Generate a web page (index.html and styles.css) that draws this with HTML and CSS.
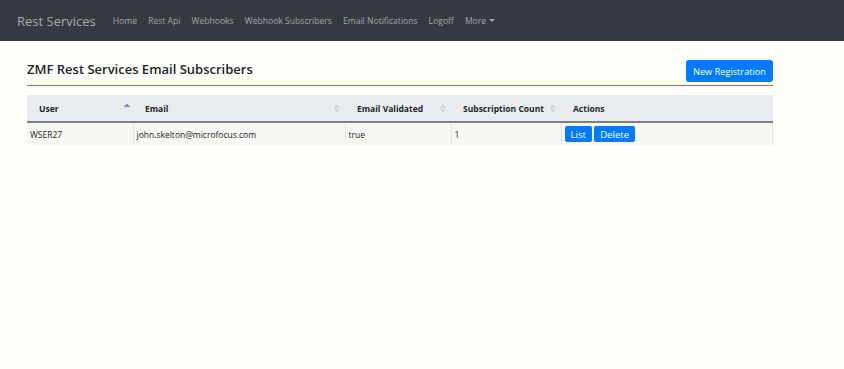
FILE: index.html
```html
<!DOCTYPE html>
<html lang="en">
<head>
  <meta charset="UTF-8">
  <meta name="viewport" content="width=device-width, initial-scale=1">
  <title>Email Subscribers</title>
  <link rel="stylesheet" href="styles.css">
</head>
<body>
  <nav class="navbar">
    <a class="brand" href="#">Rest Services</a>
    <ul class="nav">
      <li><a href="#">Home</a></li>
      <li><a href="#">Rest Api</a></li>
      <li><a href="#">Webhooks</a></li>
      <li><a href="#">Webhook Subscribers</a></li>
      <li><a href="#">Email Notifications</a></li>
      <li><a href="#">Logoff</a></li>
      <li><a href="#" class="dropdown">More</a></li>
    </ul>
  </nav>

  <div class="container">
    <div class="page-head">
      <h4>ZMF Rest Services Email Subscribers</h4>
      <button class="btn">New Registration</button>
    </div>

    <table class="grid">
      <thead>
        <tr>
          <th class="sort asc">User</th>
          <th class="sort">Email</th>
          <th class="sort">Email Validated</th>
          <th class="sort">Subscription Count</th>
          <th>Actions</th>
        </tr>
      </thead>
      <tbody>
        <tr>
          <td>WSER27</td>
          <td>john.skelton@microfocus.com</td>
          <td>true</td>
          <td>1</td>
          <td>
            <button class="btn btn-sm">List</button>
            <button class="btn btn-sm">Delete</button>
          </td>
        </tr>
      </tbody>
    </table>
  </div>
</body>
</html>
```
FILE: styles.css
```css
body {
  margin: 0;
  font-family: "Open Sans", "Noto Sans", sans-serif;
  background: #fefefa;
  color: #212529;
}
.navbar {
  height: 41px;
  background: #343a40;
  display: flex;
  align-items: center;
  padding: 0 17px;
  box-sizing: border-box;
}
.brand {
  color: #a9acaf;
  font-size: 13px;
  text-decoration: none;
  margin-right: 11.5px;
}
.nav {
  list-style: none;
  margin: 0;
  padding: 0;
  display: flex;
}
.nav a {
  display: block;
  color: #a3a6a9;
  font-size: 8.6px;
  text-decoration: none;
  padding: 0 5.5px;
}
.dropdown::after {
  content: "";
  display: inline-block;
  margin-left: 3px;
  vertical-align: 2px;
  border-top: 3px solid #a3a6a9;
  border-left: 3px solid transparent;
  border-right: 3px solid transparent;
}
.container {
  width: 746px;
  margin: 0 27px;
}
.page-head {
  display: flex;
  justify-content: space-between;
  align-items: flex-end;
  border-bottom: 1px solid #e8562a;
  padding-bottom: 3px;
  margin-top: 19px;
}
.page-head h4 {
  margin: 0 0 4px;
  font-size: 13px;
  font-weight: 600;
}
.btn {
  background: #007bff;
  color: #fff;
  border: none;
  border-radius: 3px;
  font-family: inherit;
  font-size: 9.2px;
  padding: 0 7px;
  height: 22px;
}
.btn-sm {
  height: 16px;
  padding: 0 6px;
  border-radius: 2px;
  margin-right: 0;
}
.grid {
  width: 100%;
  border-collapse: collapse;
  margin-top: 9px;
  font-size: 8.5px;
}
.grid th {
  background: #e9ecef;
  text-align: left;
  font-weight: 700;
  white-space: nowrap;
  height: 26px;
  padding: 0 12px;
  border-bottom: 2px solid #7d7f80;
  position: relative;
}
.grid th:nth-child(1) { width: 82px; }
.grid th:nth-child(2) { width: 188px; }
.grid th:nth-child(3) { width: 82px; }
.grid th:nth-child(4) { width: 86px; }
.grid td {
  background: #f7f7f3;
  height: 22px;
  padding: 0 3px;
  border-left: 1px solid #e4e4e0;
}
.grid td:first-child { border-left: none; }
.grid td:last-child { border-right: 1px solid #e4e4e0; }
.grid td .btn { font-size: 9.6px; }
.sort::after {
  content: "";
  position: absolute;
  right: 5px;
  top: 9px;
  width: 6px;
  height: 9px;
  background:
    linear-gradient(to bottom right, transparent 50%, #d3d6d8 50%) 0 0 / 3px 4px no-repeat,
    linear-gradient(to bottom left, transparent 50%, #d3d6d8 50%) 3px 0 / 3px 4px no-repeat,
    linear-gradient(to top right, transparent 50%, #d3d6d8 50%) 0 5px / 3px 4px no-repeat,
    linear-gradient(to top left, transparent 50%, #d3d6d8 50%) 3px 5px / 3px 4px no-repeat;
}
.sort.asc::after {
  top: 8px;
  height: 5px;
  right: 3px;
  background:
    linear-gradient(to bottom right, transparent 50%, #8f86d8 50%) 0 0 / 3px 4px no-repeat,
    linear-gradient(to bottom left, transparent 50%, #8f86d8 50%) 3px 0 / 3px 4px no-repeat;
}
```
